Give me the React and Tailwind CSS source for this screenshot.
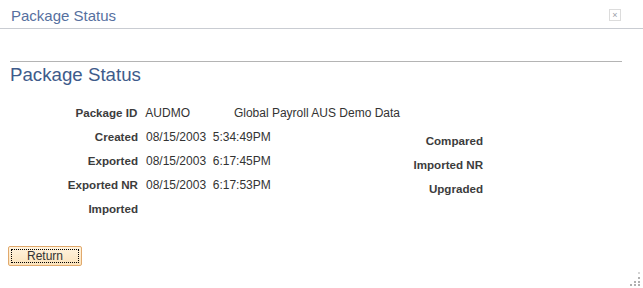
export default function App() {
  const left = [
    { label: "Package ID", value: "AUDMO", extra: "Global Payroll AUS Demo Data" },
    { label: "Created", value: "08/15/2003  5:34:49PM" },
    { label: "Exported", value: "08/15/2003  6:17:45PM" },
    { label: "Exported NR", value: "08/15/2003  6:17:53PM" },
    { label: "Imported", value: "" },
  ];
  const right = ["Compared", "Imported NR", "Upgraded"];

  return (
    <div
      className="relative w-[643px] h-[288px] bg-white overflow-hidden"
      style={{ fontFamily: '"Liberation Sans", Arial, sans-serif' }}
    >
      {/* title bar */}
      <div className="flex items-center justify-between h-[29px] border-b border-[#c9ccd2] pl-[11px] pr-[22px] pt-[2px]">
        <span className="text-[15px] text-[#56709f] leading-none">Package Status</span>
        <span className="flex items-center justify-center w-[12px] h-[12px] border border-[#dcdcdc] text-[9px] text-[#9aa0a8] leading-none">
          ×
        </span>
      </div>

      {/* page heading */}
      <div className="mt-[32px] mx-[10px] w-[612px] border-t border-[#b4b4b4]" />
      <h1 className="ml-[10px] mt-[2px] text-[18.7px] leading-[22px] text-[#3e5b8b]">Package Status</h1>

      {/* fields */}
      <div className="flex mt-[15px] text-[12px] text-[#333]">
        <div className="flex flex-col w-[400px]">
          {left.map((r) => (
            <div key={r.label} className="flex h-[24px] items-center whitespace-nowrap">
              <span className="w-[138px] text-right font-bold text-[11.6px] text-[#3c3c3c]">{r.label}</span>
              <span className="ml-[8px] w-[89px] whitespace-pre">{r.value}</span>
              {r.extra && <span className="text-[#333]">{r.extra}</span>}
            </div>
          ))}
        </div>
        <div className="flex flex-col pt-[28px] w-[83px]">
          {right.map((l) => (
            <div key={l} className="flex h-[24px] items-center justify-end">
              <span className="text-right font-bold text-[11.6px] text-[#3c3c3c] whitespace-nowrap">{l}</span>
            </div>
          ))}
        </div>
      </div>

      {/* return button */}
      <div className="ml-[8px] mt-[22px]">
        <button className="w-[74px] h-[20px] rounded-[2px] border border-[#e1a96d] bg-gradient-to-b from-[#fff3de] to-[#fbe3bc] p-[2px]">
          <span className="flex h-full w-full items-center justify-center border border-dotted border-black text-[12px] text-[#333] leading-none">
            Return
          </span>
        </button>
      </div>

      {/* resize grip */}
      <svg className="absolute right-[2px] bottom-[2px]" width="12" height="14" viewBox="0 0 12 14">
        <rect x="9" y="0" width="2" height="2" fill="#d6d6d6" />
        <rect x="9" y="5" width="2" height="2" fill="#b0b0b0" />
        <rect x="5" y="9" width="2" height="2" fill="#b0b0b0" />
        <rect x="9" y="9" width="2" height="2" fill="#b0b0b0" />
        <rect x="1" y="12" width="2" height="2" fill="#b0b0b0" />
        <rect x="5" y="12" width="2" height="2" fill="#b0b0b0" />
        <rect x="9" y="12" width="2" height="2" fill="#b0b0b0" />
      </svg>
    </div>
  );
}
